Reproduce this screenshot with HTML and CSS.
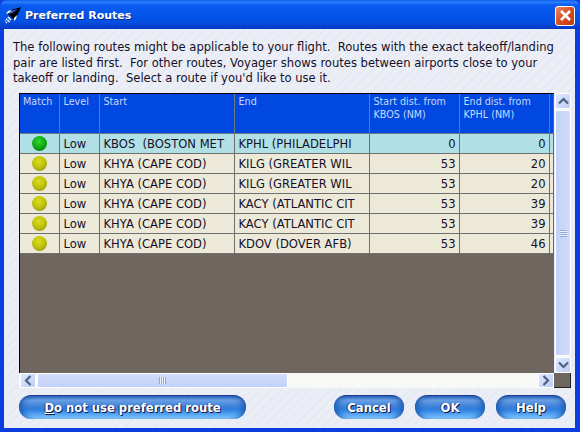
FILE: index.html
```html
<!DOCTYPE html>
<html lang="en">
  <head>
    <meta charset="UTF-8" />
    <title>Preferred Routes</title>
    <link rel="stylesheet" href="styles.css">
  </head>
  <body>
    <div class="window">
      <header class="titlebar">
        <svg class="app-icon" width="18" height="18" viewBox="0 0 18 18">
          <path d="M17 0 L7 3 L4 7 L9 12 L13 9 Z" fill="#000"/>
          <path d="M14 2 L7 4 L5 7 L8 6 Z" fill="#3a6cf0"/>
          <path d="M5 6 L2 7 L4 4 L8 3 Z M10 11 L10 14 L12 12 L13 8 Z" fill="#fff"/>
          <path d="M5 10 L1 14 M6 11 L2 16 M7 12 L4 16" stroke="#fff" stroke-width="1.3" stroke-dasharray="1.5 1"/>
        </svg>
        <span class="title">Preferred Routes</span>
        <button class="close">
          <svg width="13" height="13" viewBox="0 0 13 13"><path d="M2 2 L11 11 M11 2 L2 11" stroke="#fff" stroke-width="2.6"/></svg>
        </button>
      </header>
      <main class="body">
        <p class="intro">The following routes might be applicable to your flight.&nbsp; Routes with the exact takeoff/landing<br>pair are listed first.&nbsp; For other routes, Voyager shows routes between airports close to your<br>takeoff or landing.&nbsp; Select a route if you'd like to use it.</p>
        <div class="grid-wrap">
          <div class="list">
            <table>
              <thead>
                <tr>
                  <th class="c-match">Match</th>
                  <th class="c-level">Level</th>
                  <th class="c-start">Start</th>
                  <th class="c-end">End</th>
                  <th class="c-dist">Start dist. from<br>KBOS (NM)</th>
                  <th class="c-dist">End dist. from<br>KPHL (NM)</th>
                  <th class="c-rest"></th>
                </tr>
              </thead>
              <tbody>
                <tr class="selected">
                  <td><span class="ball green"></span></td><td>Low</td><td>KBOS&nbsp; (BOSTON MET</td><td>KPHL (PHILADELPHI</td><td class="num">0</td><td class="num">0</td><td class="rest"></td>
                </tr>
                <tr>
                  <td><span class="ball"></span></td><td>Low</td><td>KHYA (CAPE COD)</td><td>KILG (GREATER WIL</td><td class="num">53</td><td class="num">20</td><td class="rest"></td>
                </tr>
                <tr>
                  <td><span class="ball"></span></td><td>Low</td><td>KHYA (CAPE COD)</td><td>KILG (GREATER WIL</td><td class="num">53</td><td class="num">20</td><td class="rest"></td>
                </tr>
                <tr>
                  <td><span class="ball"></span></td><td>Low</td><td>KHYA (CAPE COD)</td><td>KACY (ATLANTIC CIT</td><td class="num">53</td><td class="num">39</td><td class="rest"></td>
                </tr>
                <tr>
                  <td><span class="ball"></span></td><td>Low</td><td>KHYA (CAPE COD)</td><td>KACY (ATLANTIC CIT</td><td class="num">53</td><td class="num">39</td><td class="rest"></td>
                </tr>
                <tr>
                  <td><span class="ball"></span></td><td>Low</td><td>KHYA (CAPE COD)</td><td>KDOV (DOVER AFB)</td><td class="num">53</td><td class="num">46</td><td class="rest"></td>
                </tr>
              </tbody>
            </table>
          </div>
          <div class="vscroll">
            <span class="arrow"><svg width="11" height="8" viewBox="0 0 11 8"><path d="M1 6.5 L5.5 2 L10 6.5" fill="none" stroke="#4d6185" stroke-width="2.2"/></svg></span>
            <span class="thumb thumb-v"><i class="grip-v"></i></span>
            <span class="arrow"><svg width="11" height="8" viewBox="0 0 11 8"><path d="M1 1.5 L5.5 6 L10 1.5" fill="none" stroke="#4d6185" stroke-width="2.2"/></svg></span>
          </div>
          <div class="hscroll">
            <span class="arrow"><svg width="8" height="11" viewBox="0 0 8 11"><path d="M6.5 1 L2 5.5 L6.5 10" fill="none" stroke="#4d6185" stroke-width="2.2"/></svg></span>
            <span class="thumb thumb-h"><i class="grip-h"></i></span>
            <span class="track"></span>
            <span class="arrow"><svg width="8" height="11" viewBox="0 0 8 11"><path d="M1.5 1 L6 5.5 L1.5 10" fill="none" stroke="#4d6185" stroke-width="2.2"/></svg></span>
          </div>
          <div class="corner"></div>
        </div>
        <div class="buttons">
          <button class="gel wide"><u>D</u>o not use preferred route</button>
          <span class="spacer"></span>
          <button class="gel">Cancel</button>
          <button class="gel">OK</button>
          <button class="gel">Help</button>
        </div>
      </main>
    </div>
  </body>
</html>
```

FILE: styles.css
```css
* {
  margin: 0;
  padding: 0;
  box-sizing: border-box;
}
html, body {
  width: 580px;
  height: 432px;
  overflow: hidden;
}
body {
  font-family: "DejaVu Sans", Verdana, sans-serif;
  font-size: 11.55px;
  color: #14102a;
  background-color: #0a3ee0;
}
.window {
  display: flex;
  flex-direction: column;
  height: 432px;
  background-color: #0a3ee0;
}

/* title bar */
.titlebar {
  display: flex;
  align-items: center;
  height: 29px;
  padding: 2px 5px 0 4px;
  border-radius: 7px 7px 0 0;
  background: linear-gradient(#0a5ae8 0, #2a80ff 2px, #0a5cf0 5px, #0454e8 16px, #0450e0 22px, #0a3ed0 27px, #0038c0 29px);
}
.app-icon {
  flex: none;
}
.title {
  margin-left: 3px;
  font-size: 11px;
  font-weight: bold;
  color: #fff;
  text-shadow: 1px 1px 0 #0a2c90;
}
.close {
  display: flex;
  align-items: center;
  justify-content: center;
  width: 20px;
  height: 20px;
  margin-left: auto;
  border: 1px solid #fff;
  border-radius: 3px;
  background: linear-gradient(135deg, #e88a68, #d84e22 50%, #c03a10);
}

/* dialog body */
.body {
  flex: 1;
  display: flex;
  flex-direction: column;
  margin: 0 5px 4px 4px;
  padding: 11px 4px 0 15px;
  background-color: #e9ecf4;
  background-image: repeating-linear-gradient(135deg, #ebeef6 0, #ebeef6 2px, #e3e7f0 3px, #eff1f8 5px, #e8ebf3 7px);
}
.intro {
  height: 53px;
  margin-left: -6px;
  line-height: 15.5px;
  white-space: nowrap;
}

/* route list + scrollbars */
.grid-wrap {
  display: grid;
  grid-template-columns: 535px 17px;
  grid-template-rows: 280px 15px;
  width: 552px;
}
.list {
  overflow: hidden;
  background-color: #6f6660;
  border-top: 1px solid #000;
  border-left: 1px solid #000;
}
table {
  border-collapse: collapse;
  table-layout: fixed;
  width: 533px;
}
th {
  height: 39px;
  padding: 1px 0 0 4px;
  vertical-align: top;
  text-align: left;
  font-size: 9.6px;
  font-weight: normal;
  line-height: 13px;
  color: #c8d8ff;
  background-color: #0048e0;
  border-right: 1px solid #6f7a8a;
  border-bottom: 1px solid #6f7a8a;
  overflow: hidden;
}
th.c-match { padding-left: 3px; }
.c-match { width: 39px; }
.c-level { width: 40px; }
.c-start, .c-end { width: 135px; }
.c-dist { width: 90px; }
th.c-rest { border-right: none; }
td {
  height: 20px;
  padding: 1px 3px 0 4px;
  background-color: #ece9d8;
  border-right: 1px solid #6f6f6f;
  border-bottom: 1px solid #6f6f6f;
  white-space: nowrap;
  overflow: hidden;
}
.selected td {
  background-color: #b0e0e6;
}
td.num {
  text-align: right;
}
td.rest {
  padding: 0;
  border-right: none;
}
.ball {
  display: block;
  width: 15px;
  height: 15px;
  margin: 0 auto;
  border-radius: 50%;
  background: radial-gradient(circle at 45% 35%, #d8dc18 0, #c0c410 45%, #84860a 100%);
}
.ball.green {
  background: radial-gradient(circle at 45% 35%, #30d830 0, #10a810 50%, #086808 100%);
}

.vscroll {
  display: flex;
  flex-direction: column;
  gap: 1px;
  margin-left: 1px;
  background-color: #f4f4f0;
}
.hscroll {
  display: flex;
  gap: 1px;
  padding-left: 1px;
  background-color: #f8f8f6;
}
.arrow {
  flex: none;
  display: flex;
  align-items: center;
  justify-content: center;
  width: 16px;
  height: 16px;
  border: 1px solid #fff;
  border-radius: 2px;
  background: linear-gradient(135deg, #e0e8fc, #bccdf6);
}
.hscroll .arrow {
  height: 15px;
}
.thumb {
  display: flex;
  align-items: center;
  justify-content: center;
  border: 1px solid #fff;
  border-radius: 2px;
}
.thumb-v {
  flex: 1;
  background: linear-gradient(90deg, #c2d1f9, #d0dcfa);
}
.thumb-h {
  width: 251px;
  background: linear-gradient(#d0dcfa, #c2d1f9);
}
.track {
  flex: 1;
}
.grip-v {
  width: 7px;
  height: 7px;
  background: repeating-linear-gradient(#8fa8e0 0, #8fa8e0 1px, #eef2fe 1px, #eef2fe 2px);
}
.grip-h {
  width: 7px;
  height: 7px;
  background: repeating-linear-gradient(90deg, #8fa8e0 0, #8fa8e0 1px, #eef2fe 1px, #eef2fe 2px);
}
.corner {
  background-color: #6f6660;
  border-right: 1px solid #222;
  border-bottom: 1px solid #222;
}

/* gel buttons */
.buttons {
  display: flex;
  gap: 11px;
  margin-top: 7px;
}
.spacer {
  flex: none;
  width: 66px;
}
.gel {
  flex: none;
  width: 70px;
  height: 24px;
  border: none;
  border-top: 1px solid #1a3c98;
  border-radius: 12px;
  font-family: "DejaVu Sans", Verdana, sans-serif;
  font-size: 11.6px;
  font-weight: bold;
  color: #fff;
  text-shadow: 1px 1px 0 #101c48, -1px 0 0 #284a98;
  background: linear-gradient(#2a62b8 0, #6aa0e4 4px, #3a80d8 11px, #2f80e4 14px, #68b4f8 20px, #9cd8ff 24px);
  box-shadow: inset 7px 0 6px -4px #1c5cb0, inset -7px 0 6px -4px #1c5cb0;
}
.gel.wide {
  width: 227px;
}
```
